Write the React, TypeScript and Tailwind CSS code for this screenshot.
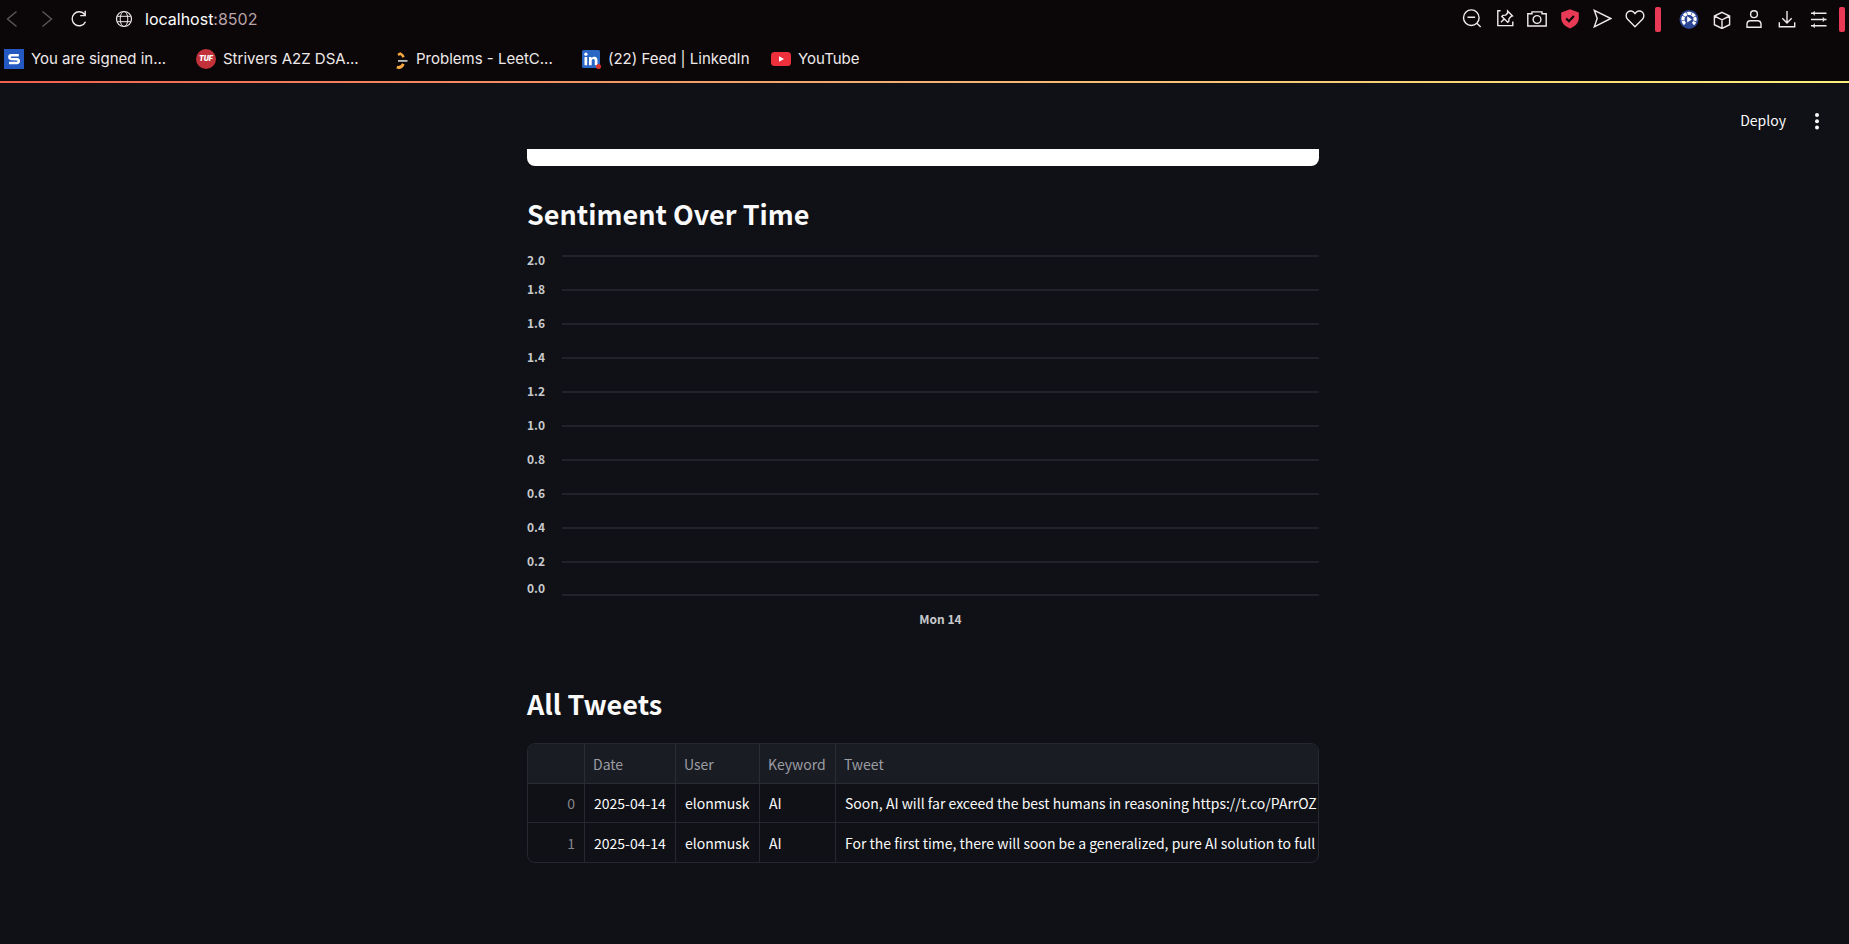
import type { ReactNode } from "react";

type IconProps = { children: ReactNode; className?: string };

function Icon({ children, className = "size-5" }: IconProps) {
  return (
    <svg
      viewBox="0 0 20 20"
      className={className}
      fill="none"
      stroke="currentColor"
      strokeWidth="1.4"
      aria-hidden="true"
    >
      {children}
    </svg>
  );
}

const pageActions = [
  {
    label: "Zoom out",
    icon: (
      <Icon>
        <circle cx="9.3" cy="8.700" r="7.800" />
        <path d="M5.500 8.300h7.600M14.900 14.300l3.800 3.700" />
      </Icon>
    ),
  },
  {
    label: "Pin tab",
    icon: (
      <Icon>
        <path d="M5.600 1.800H2.800v14.800h15v-4" />
        <path d="M6 13.200l3.400-3.400M12.600 2l4.900 4.900-1.400.5-2 2.100-.4 2.900-1 .9-5.900-5.900 1-1 2.900-.3 1.900-2z" />
      </Icon>
    ),
  },
  {
    label: "Snapshot",
    icon: (
      <Icon>
        <path d="M.8 4.800H5V2.900h10v1.900h4.200V17H.8z" />
        <circle cx="10" cy="10.500" r="3.900" />
      </Icon>
    ),
  },
  {
    label: "Ad blocker",
    icon: (
      <Icon>
        <path d="M10 .3l8.800 3.100v5.400c0 5-3.500 8.500-8.800 10.600C4.700 17.300 1.200 13.800 1.200 8.800V3.400z" fill="#e93a55" stroke="none" />
        <path d="M6.200 9.500l2.700 2.700 5-5.300" stroke="#0b0708" strokeWidth="2.200" />
      </Icon>
    ),
  },
  {
    label: "Flow",
    icon: (
      <Icon>
        <path d="M2.300 1.300l16.500 8.200L2.300 17.800 5.200 9.500z" />
      </Icon>
    ),
  },
  {
    label: "Favourite",
    icon: (
      <Icon>
        <path d="M10 17.800L2.600 10.300C.5 8 .8 4.700 2.800 3 5 1.200 8 1.700 10 4.600c2-2.900 5-3.400 7.200-1.600 2 1.700 2.300 5 .2 7.300z" />
      </Icon>
    ),
  },
];

const browserActions = [
  {
    label: "Speed dial",
    icon: (
      <Icon>
        <circle cx="10" cy="10.400" r="9.500" fill="#2b4795" stroke="none" />
        <path d="M6 15A6.100 6.100 0 1 1 14 15" stroke="#fff" strokeWidth="3.200" strokeDasharray="3.700 .6" />
        <path d="M8.200 7.300l4.600 3.100-4.600 3.100z" fill="#fff" stroke="none" />
      </Icon>
    ),
  },
  {
    label: "Extensions",
    icon: (
      <Icon>
        <path d="M10 3.300L17.600 7v8.700L10 19.500l-7.600-3.800V7zM2.400 7L10 10.800 17.600 7M10 10.800v8.700" />
      </Icon>
    ),
  },
  {
    label: "Profile",
    icon: (
      <Icon>
        <circle cx="10" cy="5.200" r="3.400" />
        <path d="M3 18.300v-3c0-2.300 1.400-3.600 3.500-3.600h7c2.100 0 3.500 1.300 3.500 3.600v3z" />
      </Icon>
    ),
  },
  {
    label: "Downloads",
    icon: (
      <Icon>
        <path d="M10 2v11.600M5.300 9.300L10 13.900l4.700-4.600M2.300 13.300v4.500h15.400v-4.500" />
      </Icon>
    ),
  },
  {
    label: "Easy setup",
    icon: (
      <Icon>
        <path d="M2 4.200h15.500M2 10.500h15.500M2 16.700h15.500" />
        <path d="M5.500 2L3.800 4.200l1.700 2.200zM14 8.300l1.700 2.200-1.700 2.200zM5.500 14.500l-1.700 2.200 1.700 2.200z" fill="currentColor" strokeWidth=".4" />
      </Icon>
    ),
  },
];

const bookmarks = [
  {
    text: "You are signed in...",
    className: "w-[192px]",
    icon: (
      <svg viewBox="0 0 20 20" className="size-5 shrink-0" aria-hidden="true">
        <rect width="20" height="20" fill="#2459c2" />
        <path d="M14.800 6.300H7.200c-1.500 0-1.800.6-1.800 1.700 0 1.300.5 1.800 1.800 1.900l5.800.3c1.300.1 1.800.7 1.800 1.900 0 1.300-.5 1.900-1.900 1.900H5" fill="none" stroke="#fff" strokeWidth="2.500" />
      </svg>
    ),
  },
  {
    text: "Strivers A2Z DSA...",
    className: "w-[193px]",
    icon: (
      <span className="flex size-5 shrink-0 items-center justify-center rounded-full bg-[#c3323a] text-[7px] leading-none font-black text-white italic">
        TUF
      </span>
    ),
  },
  {
    text: "Problems - LeetC...",
    className: "w-[192px]",
    icon: (
      <svg viewBox="0 0 20 20" className="size-5 shrink-0" fill="none" aria-hidden="true">
        <path d="M9 5.900l2.300-1.200c1.600.8 2.700 2 3.300 3.600" stroke="#f5a742" strokeWidth="2.500" />
        <path d="M7.800 18.200c2.600.8 5.200-.4 6.600-3.400" stroke="#f5a742" strokeWidth="2.800" />
        <path d="M9 11.900h9.500" stroke="#b9b9b9" strokeWidth="1.900" />
      </svg>
    ),
  },
  {
    text: "(22) Feed | LinkedIn",
    className: "w-[190px]",
    icon: (
      <svg viewBox="0 0 20 20" className="size-5 shrink-0" aria-hidden="true">
        <rect x="1" y="1" width="18" height="18" rx="1.500" fill="#2a66c4" />
        <path d="M3.500 8h2.700v8.300H3.500zM8 8h2.500v1.200c.7-1 1.700-1.500 2.800-1.500 2.300 0 3.200 1.500 3.200 3.900v4.700h-2.700v-4.300c0-1.300-.4-2-1.400-2s-1.700.7-1.700 2v4.300H8z" fill="#fff" />
        <circle cx="4.900" cy="5.200" r="1.600" fill="#fff" />
        <circle cx="17.500" cy="17.500" r="2.500" fill="#d8352f" />
      </svg>
    ),
  },
  {
    text: "YouTube",
    className: "",
    icon: (
      <svg viewBox="0 0 20 20" className="size-5 shrink-0" aria-hidden="true">
        <rect y="3" width="20" height="14" rx="3.500" fill="#ee2f3c" />
        <path d="M8 7.200l5 2.800-5 2.800z" fill="#fff" />
      </svg>
    ),
  },
];

const ticks = [
  { label: "2.0", line: 1, text: 10 },
  { label: "1.8", line: 35, text: 39 },
  { label: "1.6", line: 69, text: 73 },
  { label: "1.4", line: 103, text: 107 },
  { label: "1.2", line: 137, text: 141 },
  { label: "1.0", line: 171, text: 175 },
  { label: "0.8", line: 205, text: 209 },
  { label: "0.6", line: 239, text: 243 },
  { label: "0.4", line: 273, text: 277 },
  { label: "0.2", line: 307, text: 311 },
  { label: "0.0", line: 340, text: 338 },
];

const tweets = [
  {
    date: "2025-04-14",
    user: "elonmusk",
    keyword: "AI",
    tweet: "Soon, AI will far exceed the best humans in reasoning https://t.co/PArrOZ",
  },
  {
    date: "2025-04-14",
    user: "elonmusk",
    keyword: "AI",
    tweet: "For the first time, there will soon be a generalized, pure AI solution to full",
  },
];

function BrowserBar() {
  return (
    <header className="bg-[#0b0708] font-['Inter',sans-serif] text-[#efe9ea]">
      <div className="flex h-[38px] items-center pr-1">
        <button aria-label="Back" className="ml-0.5 text-[#5c5758]">
          <Icon><path d="M14.500 2.500L5.500 10l9 7.500" /></Icon>
        </button>
        <button aria-label="Forward" className="ml-[15px] text-[#5c5758]">
          <Icon><path d="M5.500 2.500l9 7.500-9 7.500" /></Icon>
        </button>
        <button aria-label="Reload" className="ml-3">
          <Icon>
            <path d="M16.500 12.700A7 7 0 1 1 15.700 5.500M16.200 1.800v4.800h-5" />
          </Icon>
        </button>
        <span className="ml-[25px]">
          <Icon>
            <circle cx="10" cy="10" r="7.500" strokeWidth="1.200" />
            <ellipse cx="10" cy="10" rx="3.800" ry="7.500" strokeWidth="1" />
            <path d="M3.200 7.300h13.600M3.200 12.700h13.600" strokeWidth="1" />
          </Icon>
        </span>
        <a href="#top" className="ml-[11px] text-base leading-5 text-white">
          localhost<span className="text-[#b9a3a9]">:8502</span>
        </a>
        <div className="ml-auto flex w-[183px] shrink-0 justify-between">
          {pageActions.map((a) => (
            <button key={a.label} aria-label={a.label}>{a.icon}</button>
          ))}
        </div>
        <span className="ml-2.5 h-[25px] w-1.5 shrink-0 rounded-xs bg-[#e93a55]" />
        <div className="ml-[18px] flex w-[150px] shrink-0 justify-between">
          {browserActions.map((a) => (
            <button key={a.label} aria-label={a.label}>{a.icon}</button>
          ))}
        </div>
        <span className="ml-2.5 h-[25px] w-1.5 shrink-0 rounded-xs bg-[#e93a55]" />
      </div>
      <nav aria-label="Bookmarks" className="flex h-[43px] items-center pb-0.5 pl-1">
        {bookmarks.map((b) => (
          <a
            key={b.text}
            href="#top"
            className={`flex shrink-0 items-center gap-[7px] text-[15px] leading-5 whitespace-nowrap ${b.className}`}
          >
            {b.icon}
            {b.text}
          </a>
        ))}
      </nav>
      <div className="h-0.5 bg-linear-to-r from-[#f0604f] via-[#f3b173] to-[#fbf07c]" />
    </header>
  );
}

function SentimentChart() {
  return (
    <svg className="block h-[378px] w-full overflow-visible" role="img" aria-label="Sentiment over time">
      <g fill="#c8c9cc" className="text-xs font-bold">
        {ticks.map((t) => (
          <g key={t.label}>
            <line x1="35" x2="100%" y1={t.line} y2={t.line} stroke="#282a32" strokeWidth="1.500" />
            <text x="0" y={t.text}>{t.label}</text>
          </g>
        ))}
        <text x="52.200%" y="369" textAnchor="middle">Mon 14</text>
      </g>
    </svg>
  );
}

function TweetTable() {
  const head = "border-r border-b border-[#2b2d36] px-2 text-left font-normal";
  const cell = "border-r border-[#26282f] px-[9px] group-not-last:border-b";
  return (
    <div className="overflow-hidden rounded-lg border border-[#26282f]">
      <table className="w-full table-fixed border-separate border-spacing-0 text-sm leading-5 whitespace-nowrap">
        <colgroup>
          <col className="w-[57px]" />
          <col className="w-[91px]" />
          <col className="w-[84px]" />
          <col className="w-[76px]" />
          <col />
        </colgroup>
        <thead className="bg-[#1a1c24] text-[#9c9da2]">
          <tr className="h-10">
            <th className={head} aria-label="Index" />
            <th className={head}>Date</th>
            <th className={head}>User</th>
            <th className={head}>Keyword</th>
            <th className="border-b border-[#2b2d36] px-2 text-left font-normal">Tweet</th>
          </tr>
        </thead>
        <tbody className="text-[#fafafa]">
          {tweets.map((t, i) => (
            <tr key={i} className="group h-[39px]">
              <td className={`${cell} text-right text-[#85868b]`}>{i}</td>
              <td className={cell}>{t.date}</td>
              <td className={cell}>{t.user}</td>
              <td className={cell}>{t.keyword}</td>
              <td className="overflow-hidden border-[#26282f] pl-[9px] group-not-last:border-b">{t.tweet}</td>
            </tr>
          ))}
        </tbody>
      </table>
    </div>
  );
}

export default function App() {
  return (
    <div id="top" className="min-h-screen bg-[#0f1116]">
      <BrowserBar />
      <div className="font-['Noto_Sans_CJK_SC',sans-serif] text-[#fafafa]">
        <div className="flex h-[66px] items-center justify-end gap-[21px] pt-2.5 pr-[22px]">
          <button className="pb-0.5 text-sm leading-5">Deploy</button>
          <button aria-label="Main menu">
            <Icon>
              <g fill="currentColor" stroke="none">
                <circle cx="10" cy="4" r="2" />
                <circle cx="10" cy="10.300" r="2" />
                <circle cx="10" cy="16.500" r="2" />
              </g>
            </Icon>
          </button>
        </div>
        <main className="pr-[3px] pb-20">
          <div className="mx-auto max-w-[792px]">
            <div className="h-[17px] rounded-b-lg bg-white" />
            <h2 className="mt-[30px] text-[27px] leading-9 font-bold">Sentiment Over Time</h2>
            <div className="mt-[23px]">
              <SentimentChart />
            </div>
            <h2 className="mt-[53px] text-[27px] leading-9 font-bold">All Tweets</h2>
            <div className="mt-[21px]">
              <TweetTable />
            </div>
          </div>
        </main>
      </div>
    </div>
  );
}
